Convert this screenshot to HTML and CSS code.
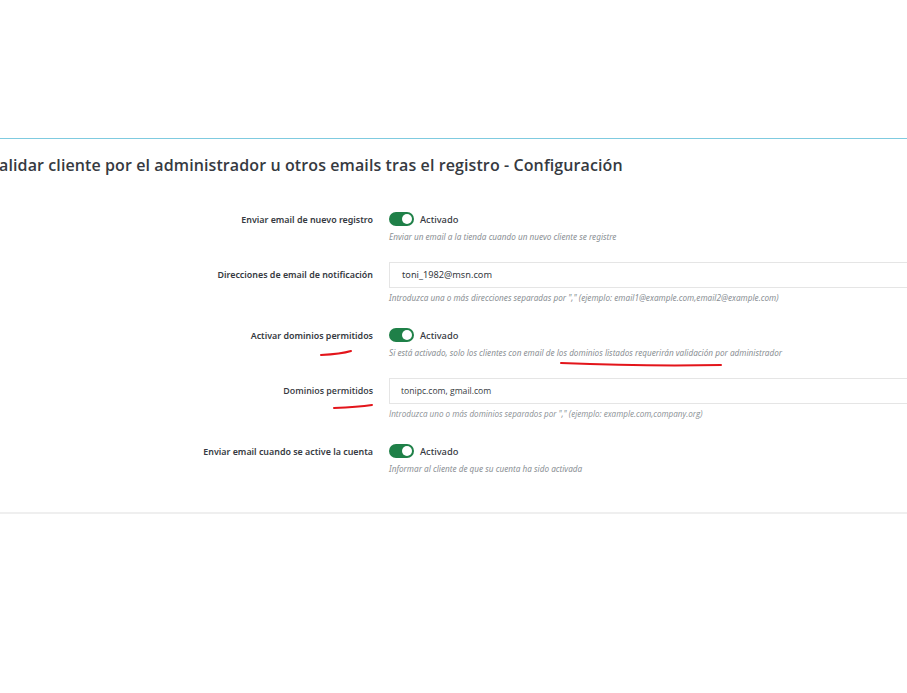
FILE: index.html
```html
<!DOCTYPE html>
<html lang="es">

<head>
    <meta charset="UTF-8">
    <meta name="viewport" content="width=device-width, initial-scale=1">
    <title>Configuración</title>
    <link rel="stylesheet" href="styles.css">
</head>

<body>
    <div class="panel">
        <h3 class="panel-heading">Validar cliente por el administrador u otros emails tras el registro - Configuración</h3>
        <div class="form-wrapper">
            <div class="form-group">
                <label class="control-label">Enviar email de nuevo registro</label>
                <div class="control">
                    <div class="switch-line">
                        <span class="switch"><span class="knob"></span></span>
                        <span class="switch-label">Activado</span>
                    </div>
                    <p class="help-block">Enviar un email a la tienda cuando un nuevo cliente se registre</p>
                </div>
            </div>
            <div class="form-group input-group">
                <label class="control-label">Direcciones de email de notificación</label>
                <div class="control">
                    <div class="text-input">toni_1982@msn.com</div>
                    <p class="help-block">Introduzca una o más direcciones separadas por "," (ejemplo: email1@example.com,email2@example.com)</p>
                </div>
            </div>
            <div class="form-group">
                <label class="control-label">Activar dominios permitidos</label>
                <div class="control">
                    <div class="switch-line">
                        <span class="switch"><span class="knob"></span></span>
                        <span class="switch-label">Activado</span>
                    </div>
                    <p class="help-block">Si está activado, solo los clientes con email de los dominios listados requerirán validación por administrador</p>
                </div>
                <!-- hand-drawn marks -->
                <svg class="mark mark-label" width="34" height="8" viewBox="0 0 34 8"><path d="M2 6 C12 5.5 22 5 32 2" /></svg>
                <svg class="mark mark-help" width="164" height="8" viewBox="0 0 164 8"><path d="M2 2 C50 4 110 5 162 4" /></svg>
            </div>
            <div class="form-group input-group">
                <label class="control-label open">Dominios permitidos</label>
                <div class="control">
                    <div class="text-input open">tonipc.com, gmail.com</div>
                    <p class="help-block open">Introduzca uno o más dominios separados por "," (ejemplo: example.com,company.org)</p>
                </div>
                <svg class="mark mark-domains" width="42" height="8" viewBox="0 0 42 8"><path d="M2 6 C14 5.5 26 5 40 3" /></svg>
            </div>
            <div class="form-group">
                <label class="control-label">Enviar email cuando se active la cuenta</label>
                <div class="control">
                    <div class="switch-line">
                        <span class="switch"><span class="knob"></span></span>
                        <span class="switch-label">Activado</span>
                    </div>
                    <p class="help-block">Informar al cliente de que su cuenta ha sido activada</p>
                </div>
            </div>
        </div>
    </div>
</body>

</html>
```

FILE: styles.css
```css
:root {
    --text-color: #363a41;
    --help-color: #8a8f94;
    --border-color: #e5e5e5;
    --accent: #7fcbe0;
    --switch-on: #1f8048;
}

html,
body {
    margin: 0;
    padding: 0;
    background: #fff;
    overflow: hidden;
}

body {
    font-family: "Noto Sans", sans-serif;
    color: var(--text-color);
}

.panel {
    margin: 138px 0 0 -11px;
    width: 1100px;
    border-top: 1px solid var(--accent);
    border-bottom: 2px solid #efefef;
    padding-bottom: 18px;
}

.panel-heading {
    font-family: "Open Sans", sans-serif;
    font-weight: 600;
    font-size: 16px;
    margin: 0;
    padding: 15px 0 0 0;
    height: 38px;
    letter-spacing: 0.1px;
}

.form-wrapper {
    padding-top: 19px;
}

.form-group {
    position: relative;
    display: grid;
    grid-template-columns: 384px 1fr;
    column-gap: 16px;
    margin-bottom: 19px;
}

.form-group.input-group {
    margin-bottom: 23px;
}

.control-label {
    text-align: right;
    font-size: 8.9px;
    font-weight: 600;
    line-height: 16px;
    padding-top: 1px;
}

.input-group .control-label {
    padding-top: 5px;
}

.control-label.open {
    font-family: "Open Sans", sans-serif;
    font-size: 8.9px;
}

.control {
    display: flex;
    flex-direction: column;
}

.switch-line {
    display: flex;
    align-items: center;
    height: 16px;
    gap: 6px;
}

.switch {
    display: flex;
    justify-content: flex-end;
    align-items: center;
    width: 25px;
    height: 14px;
    border-radius: 7px;
    background: var(--switch-on);
    box-sizing: border-box;
    padding: 2px;
}

.knob {
    width: 10px;
    height: 10px;
    border-radius: 50%;
    background: #fff;
}

.switch-label {
    font-size: 9.3px;
    font-weight: 500;
}

.text-input {
    box-sizing: border-box;
    height: 26px;
    width: 700px;
    border: 1px solid var(--border-color);
    padding: 0 12px;
    font-size: 9.2px;
    line-height: 24px;
}

.text-input.open {
    font-family: "Open Sans", sans-serif;
    font-size: 8.6px;
    padding-left: 11px;
}

.help-block {
    margin: 3px 0 0 0;
    font-size: 8.2px;
    font-style: italic;
    line-height: 13px;
    color: var(--help-color);
}

.help-block.open {
    font-family: "Open Sans", sans-serif;
    font-size: 8.1px;
}

/* red pen strokes over the form */
.mark {
    position: absolute;
    overflow: visible;
}

.mark path {
    fill: none;
    stroke: #e3151b;
    stroke-width: 2;
    stroke-linecap: round;
}

.mark-label {
    left: 330px;
    top: 22px;
}

.mark-help {
    left: 570px;
    top: 34px;
}

.mark-domains {
    left: 343px;
    top: 24px;
}
```
